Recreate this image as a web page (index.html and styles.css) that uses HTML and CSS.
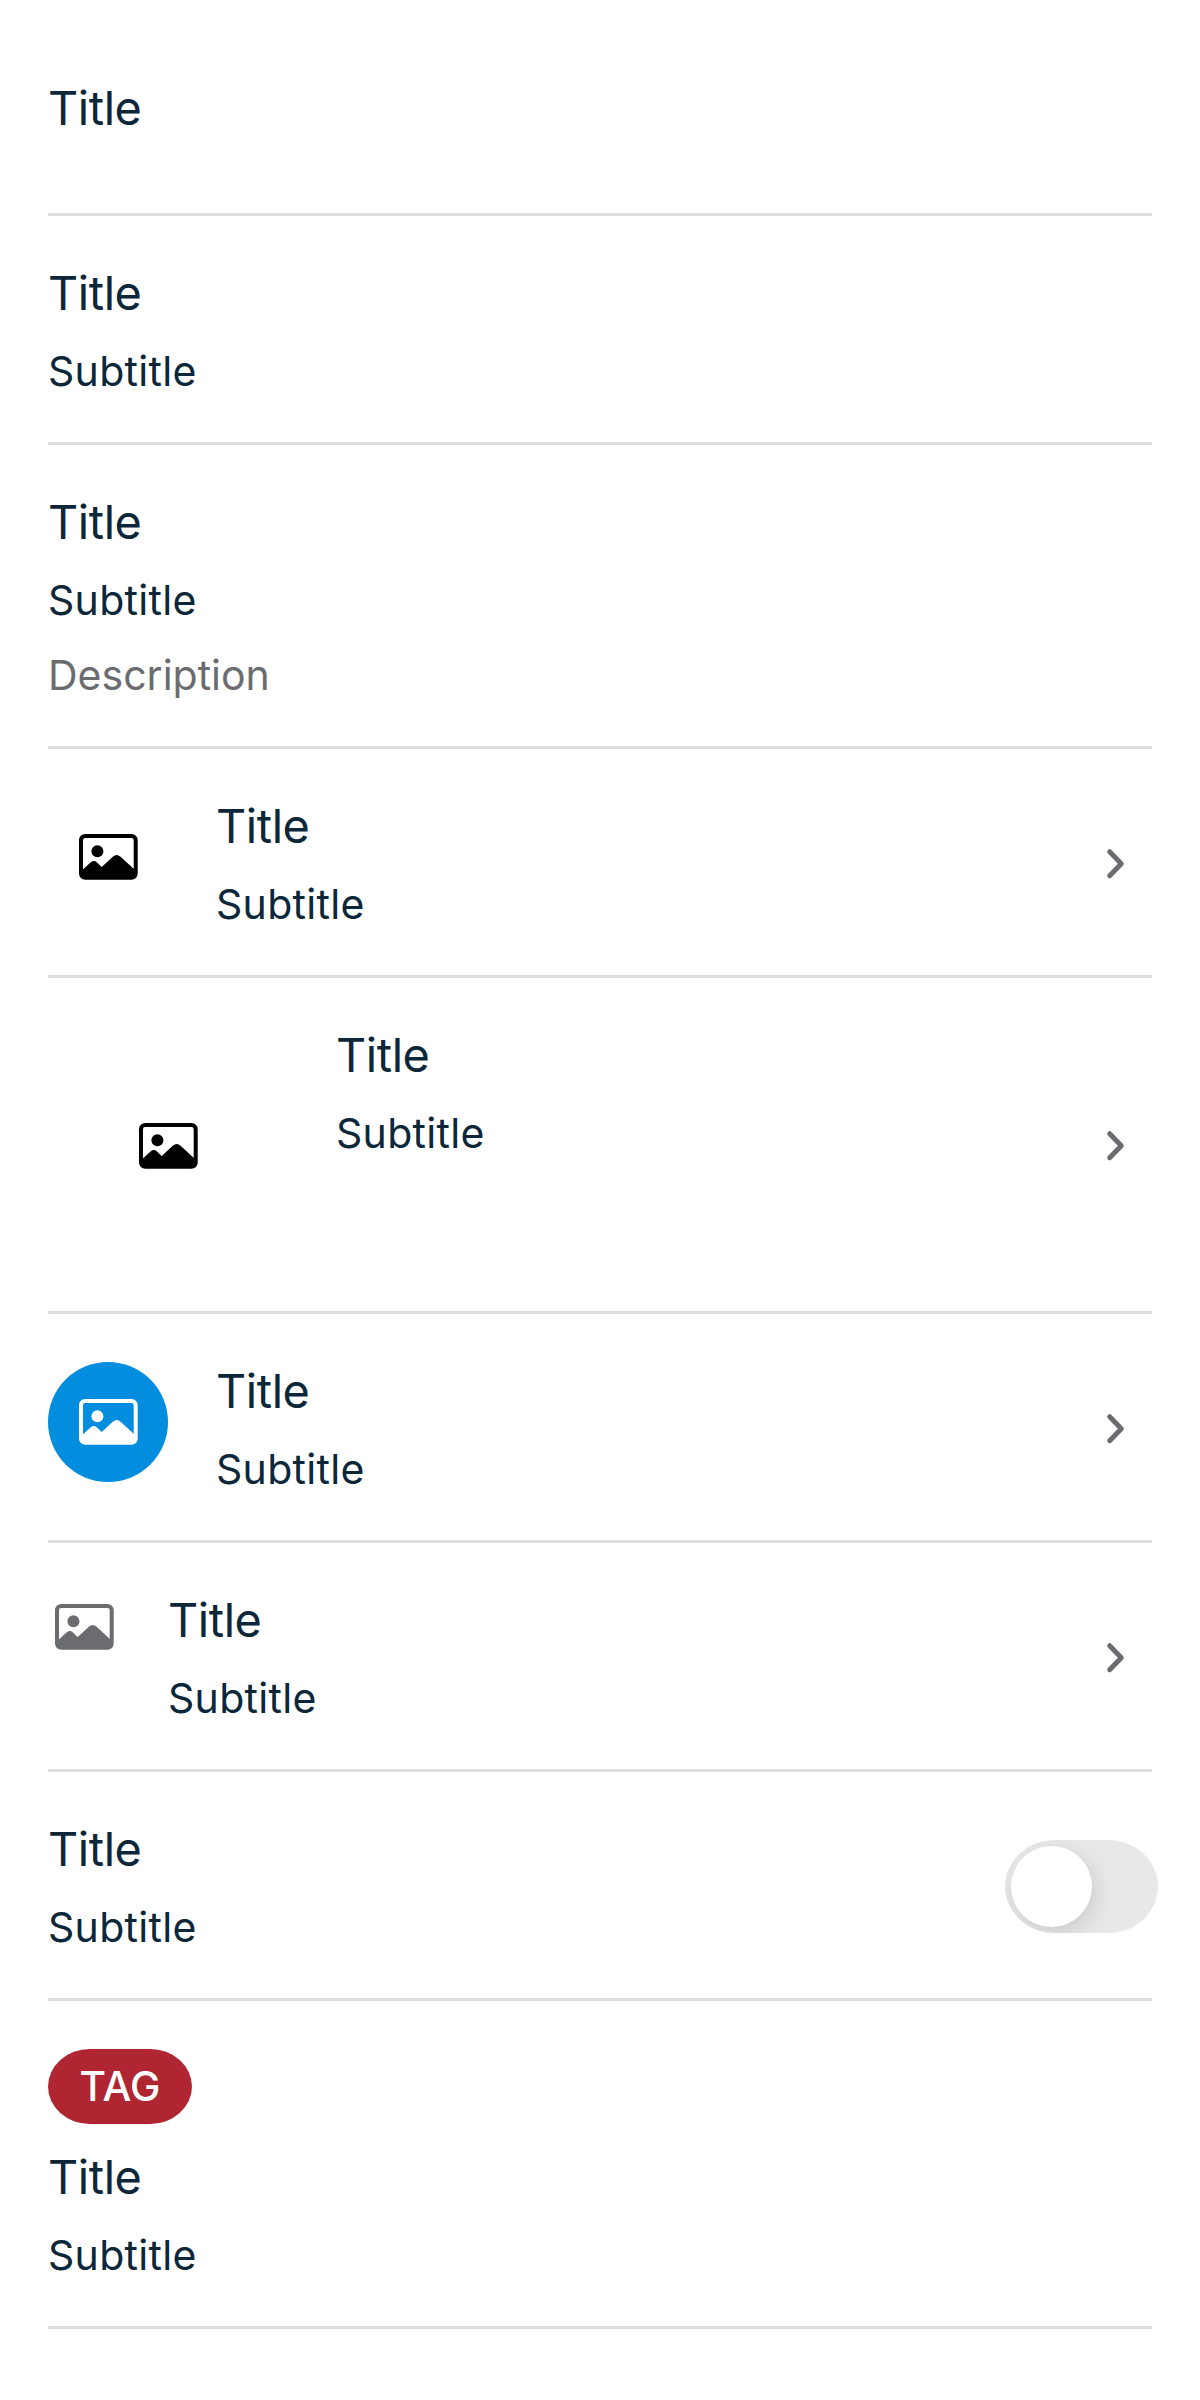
FILE: index.html
```html
<!DOCTYPE html>
<html lang="en">
<head>
<meta charset="utf-8">
<title>List</title>
<link rel="stylesheet" href="styles.css">
</head>
<body>
<svg class="defs" width="0" height="0">
  <symbol id="image" viewBox="0 0 72 72">
    <rect x="9" y="15" width="54.7" height="41.8" rx="4.2" fill="none" stroke="currentColor" stroke-width="4"/>
    <circle cx="25.4" cy="30.3" r="6" fill="currentColor"/>
    <path d="M10 49.3L18.800 41.300Q22 38.700 25 41.500L29.700 46.100L40.800 35.800Q44.700 32.300 48.600 35.800L63 48.900V57H10Z" fill="currentColor"/>
  </symbol>
  <symbol id="chevron" viewBox="0 0 72 72">
    <path d="M29.700 23.700L41.300 35.700L29.700 47.700" fill="none" stroke="currentColor" stroke-width="5" stroke-linecap="round" stroke-linejoin="round"/>
  </symbol>
</svg>
<main class="list">
  <div class="row row-single"><div class="text"><div class="title">Title</div></div></div>
  <div class="row"><div class="text"><div class="title">Title</div><div class="subtitle">Subtitle</div></div></div>
  <div class="row"><div class="text"><div class="title">Title</div><div class="subtitle">Subtitle</div><div class="description">Description</div></div></div>
  <div class="row">
    <div class="asset"><svg class="icon"><use href="#image"/></svg></div>
    <div class="text"><div class="title">Title</div><div class="subtitle">Subtitle</div></div>
    <svg class="icon chevron"><use href="#chevron"/></svg>
  </div>
  <div class="row">
    <div class="asset asset-large"><svg class="icon"><use href="#image"/></svg></div>
    <div class="text"><div class="title">Title</div><div class="subtitle">Subtitle</div></div>
    <svg class="icon chevron"><use href="#chevron"/></svg>
  </div>
  <div class="row">
    <div class="asset asset-circle"><svg class="icon"><use href="#image"/></svg></div>
    <div class="text"><div class="title">Title</div><div class="subtitle">Subtitle</div></div>
    <svg class="icon chevron"><use href="#chevron"/></svg>
  </div>
  <div class="row">
    <div class="asset asset-small"><svg class="icon"><use href="#image"/></svg></div>
    <div class="text"><div class="title">Title</div><div class="subtitle">Subtitle</div></div>
    <svg class="icon chevron"><use href="#chevron"/></svg>
  </div>
  <div class="row">
    <div class="text"><div class="title">Title</div><div class="subtitle">Subtitle</div></div>
    <div class="switch"><div class="knob"></div></div>
  </div>
  <div class="row"><div class="text"><div class="tag">TAG</div><div class="title">Title</div><div class="subtitle">Subtitle</div></div></div>
</main>
</body>
</html>
```
FILE: styles.css
```css
body {
  margin: 0;
  background: #fff;
  color: #0b2739;
  font-family: Inter, "Liberation Sans", sans-serif;
}
.defs { display: block; height: 0; }
.list { padding: 0 48px; }
.row {
  display: flex;
  align-items: flex-start;
  gap: 48px;
  padding: 48px 0 45px;
  border-bottom: 3px solid #ddd;
}
.row-single {
  box-sizing: border-box;
  height: 216px;
  align-items: center;
  padding: 2px 0 0;
}
.text { flex: 1; padding-bottom: 1px; }
.row-single .text { padding: 0; }
.title { font-size: 46.8px; line-height: 58px; letter-spacing: -0.4px; }
.subtitle, .description { font-size: 41px; line-height: 50px; }
.subtitle { margin-top: 24px; letter-spacing: 0.3px; }
.description { margin-top: 25px; color: #6b6c6f; letter-spacing: 0; }
.icon { display: block; width: 72px; height: 72px; flex: none; }
.asset {
  display: flex;
  align-items: center;
  justify-content: center;
  width: 120px;
  height: 120px;
  color: #000;
}
.asset-large { width: 240px; height: 240px; }
.asset-circle { border-radius: 50%; background: #028ddf; color: #fff; }
.asset-small { width: 72px; height: 72px; color: #6b6c6f; }
.chevron { align-self: center; color: #6b6c6f; }
.switch {
  box-sizing: border-box;
  align-self: center;
  width: 153px;
  height: 93px;
  margin-right: -6px;
  padding: 6px;
  border-radius: 50px / 46.5px;
  background: #e8e8e8;
  overflow: hidden;
}
.knob {
  width: 81px;
  height: 81px;
  border-radius: 50%;
  background: #fff;
  box-shadow: 3px 6px 20px rgba(0, 0, 0, 0.13);
}
.tag {
  width: 144px;
  height: 75px;
  margin-bottom: 24px;
  border-radius: 42px / 37.5px;
  background: #b02532;
  color: #fff;
  font-size: 40.7px;
  font-weight: 500;
  line-height: 75px;
  text-align: center;
}
```
